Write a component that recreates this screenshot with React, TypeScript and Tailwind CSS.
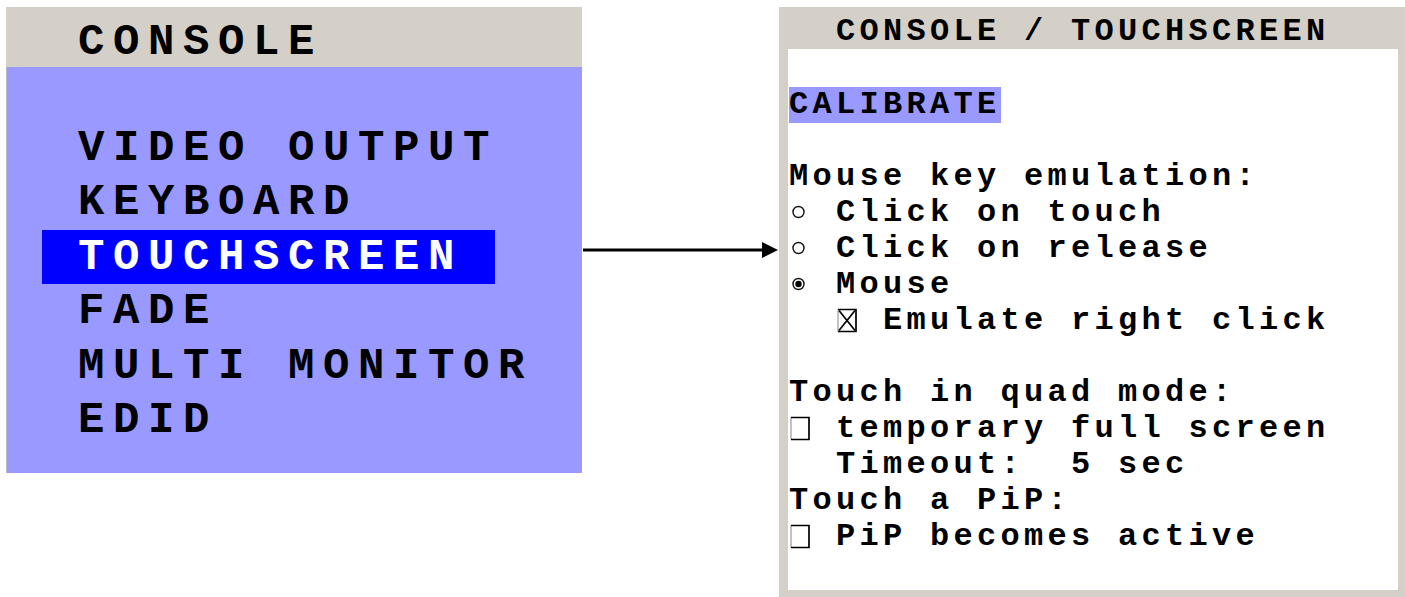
import React from 'react';

const mono = "font-['Liberation_Mono','Courier_New',monospace] font-bold";

const menu = ['VIDEO OUTPUT', 'KEYBOARD', 'TOUCHSCREEN', 'FADE', 'MULTI MONITOR', 'EDID'];

type Mark = 'radio' | 'radioOn' | 'box' | 'boxX' | null;

// one row of the touchscreen page: leading cells, optional mark, text
const lines: { indent?: number; mark?: Mark; text: string; hl?: boolean }[] = [
  { text: '' },
  { text: 'CALIBRATE', hl: true },
  { text: '' },
  { text: 'Mouse key emulation:' },
  { mark: 'radio', text: ' Click on touch' },
  { mark: 'radio', text: ' Click on release' },
  { mark: 'radioOn', text: ' Mouse' },
  { indent: 2, mark: 'boxX', text: ' Emulate right click' },
  { text: '' },
  { text: 'Touch in quad mode:' },
  { mark: 'box', text: ' temporary full screen' },
  { text: '  Timeout:  5 sec' },
  { text: 'Touch a PiP:' },
  { mark: 'box', text: ' PiP becomes active' },
];

function MarkIcon({ kind }: { kind: Mark }) {
  if (kind === 'radio' || kind === 'radioOn') {
    return (
      <svg width="23.5" height="36" viewBox="0 0 23.5 36">
        <circle cx="9.5" cy="17" r="5.5" fill="white" stroke="#111" strokeWidth="1.4" />
        {kind === 'radioOn' && <circle cx="9.5" cy="17" r="3.2" fill="#000" />}
      </svg>
    );
  }
  return (
    <svg width="23.5" height="36" viewBox="0 0 23.5 36">
      <line x1="2" y1="6.5" x2="2" y2="28.5" stroke="#9a9a9a" strokeWidth="1.2" />
      <path d="M2 6.5 H20 V28.5 H2" fill="none" stroke="#000" strokeWidth="1.7" />
      {kind === 'boxX' && <path d="M3 7.5 L19 27.5 M19 7.5 L3 27.5" stroke="#000" strokeWidth="1.7" />}
    </svg>
  );
}

export default function App() {
  return (
    <div className={`w-[1405px] h-[597px] bg-white flex items-start text-black ${mono}`}>
      {/* left: console menu */}
      <div className="mt-[7px] ml-[6px] w-[576px] flex flex-col">
        <div className="h-[60px] bg-[#d4d0c8] pl-[72px] pt-[10px] text-[44px] leading-[50px] tracking-[8.6px] whitespace-pre">
          CONSOLE
        </div>
        <div className="h-[406px] bg-[#9999ff] border-l border-[#b8b8cc] pt-[54px] text-[44px] tracking-[8.6px] whitespace-pre">
          {menu.map((m) =>
            m === 'TOUCHSCREEN' ? (
              <div key={m} className="ml-[35px] w-[453px] h-[54.4px] leading-[54.4px] pl-[36px] bg-[#0000ff] text-white">
                {m}
              </div>
            ) : (
              <div key={m} className="h-[54.4px] leading-[54.4px] pl-[71px]">
                {m}
              </div>
            )
          )}
        </div>
      </div>

      {/* arrow */}
      <svg className="mt-[240px] shrink-0" width="197" height="20" viewBox="0 0 197 20">
        <line x1="1" y1="10" x2="183" y2="10" stroke="#000" strokeWidth="3.2" />
        <polygon points="180,2 196,10 180,18" fill="#000" />
      </svg>

      {/* right: touchscreen page */}
      <div className="mt-[7px] w-[626px] h-[590px] bg-[#d4d0c8] flex flex-col">
        <div className="h-[42px] pl-[57px] pt-[8px] text-[32px] leading-[34px] tracking-[4.3px] whitespace-pre">
          CONSOLE / TOUCHSCREEN
        </div>
        <div className="flex-1 ml-[9px] mr-[7px] mb-[7px] bg-white pt-[2px] pl-[1px] text-[32px] tracking-[4.3px]">
          {lines.map((l, i) => (
            <div key={i} className="h-[36px] leading-[36px] flex items-start whitespace-pre">
              {l.indent ? <span className="w-[47px] shrink-0" /> : null}
              {l.mark ? (
                <span className="w-[23.5px] h-[36px] shrink-0">
                  <MarkIcon kind={l.mark} />
                </span>
              ) : null}
              <span className={l.hl ? 'bg-[#9999ff]' : ''}>{l.text}</span>
            </div>
          ))}
        </div>
      </div>
    </div>
  );
}
